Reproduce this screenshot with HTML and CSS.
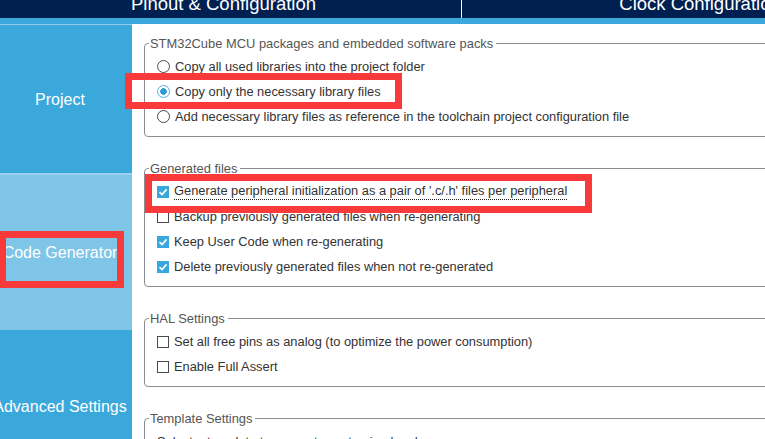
FILE: index.html
```html
<!DOCTYPE html>
<html>
<head>
<meta charset="utf-8">
<link rel="stylesheet" href="styles.css">
</head>
<body>
<header class="topbar">
  <div class="tabs">
    <div class="tab">Pinout &amp; Configuration</div>
    <div class="tab tab-second">Clock Configuration</div>
  </div>
  <div class="band"></div>
</header>
<div class="main">
  <nav class="sidebar">
    <div class="nav-item nav-project"><span>Project</span></div>
    <div class="nav-item nav-code"><span>Code Generator</span></div>
    <div class="nav-item nav-advanced"><span>Advanced Settings</span></div>
  </nav>
  <section class="content">
    <fieldset class="group">
      <legend>STM32Cube MCU packages and embedded software packs</legend>
      <div class="row"><span class="radio"></span><span>Copy all used libraries into the project folder</span></div>
      <div class="row"><span class="radio on"></span><span>Copy only the necessary library files</span></div>
      <div class="row"><span class="radio"></span><span>Add necessary library files as reference in the toolchain project configuration file</span></div>
    </fieldset>
    <fieldset class="group">
      <legend>Generated files</legend>
      <div class="row"><span class="check on"><svg viewBox="0 0 12 12" width="12" height="12"><polyline points="2.5,6.2 5,8.6 9.6,3.4" fill="none" stroke="#fff" stroke-width="1.6"/></svg></span><span class="tip">Generate peripheral initialization as a pair of '.c/.h' files per peripheral</span></div>
      <div class="row"><span class="check"></span><span>Backup previously generated files when re-generating</span></div>
      <div class="row"><span class="check on"><svg viewBox="0 0 12 12" width="12" height="12"><polyline points="2.5,6.2 5,8.6 9.6,3.4" fill="none" stroke="#fff" stroke-width="1.6"/></svg></span><span>Keep User Code when re-generating</span></div>
      <div class="row"><span class="check on"><svg viewBox="0 0 12 12" width="12" height="12"><polyline points="2.5,6.2 5,8.6 9.6,3.4" fill="none" stroke="#fff" stroke-width="1.6"/></svg></span><span>Delete previously generated files when not re-generated</span></div>
    </fieldset>
    <fieldset class="group">
      <legend>HAL Settings</legend>
      <div class="row"><span class="check"></span><span>Set all free pins as analog (to optimize the power consumption)</span></div>
      <div class="row"><span class="check"></span><span>Enable Full Assert</span></div>
    </fieldset>
    <fieldset class="group">
      <legend>Template Settings</legend>
      <div class="row"><span>Select a template to generate customized code</span></div>
    </fieldset>
  </section>
</div>
<div class="mark mark-copy"></div>
<div class="mark mark-generate"></div>
<div class="mark mark-codegen"></div>
</body>
</html>
```
FILE: styles.css
```css
html, body {
  margin: 0;
  padding: 0;
  width: 765px;
  height: 439px;
  overflow: hidden;
  background: #ffffff;
  font-family: "Liberation Sans", Arial, sans-serif;
}
body {
  position: relative;
}
.topbar {
  display: flex;
  flex-direction: column;
}
.tabs {
  display: flex;
  height: 18px;
  background: #002052;
  overflow: hidden;
  margin-left: -14px;
}
.tab {
  flex: 0 0 475px;
  height: 18px;
  line-height: 8px;
  color: #ffffff;
  font-size: 18.5px;
  text-align: center;
  white-space: nowrap;
}
.tab-second {
  flex: 0 0 476px;
  border-left: 1px solid #ffffff;
}
.band {
  height: 6px;
  background: #3aa8db;
}
.main {
  display: flex;
  height: 415px;
}
.sidebar {
  flex: 0 0 132px;
  display: flex;
  flex-direction: column;
  background: #3aa8db;
  border-top: 1px solid #8ecbea;
  box-sizing: border-box;
  overflow: hidden;
}
.nav-item {
  display: flex;
  align-items: center;
  justify-content: center;
  padding-right: 12px;
  color: #ffffff;
  font-size: 16px;
  white-space: nowrap;
  flex: none;
}
.nav-project {
  height: 146px;
  padding-top: 2px;
}
.nav-code {
  height: 155px;
  background: #7ec5e8;
  border-top: 2px solid #9ad2ee;
}
.nav-advanced {
  height: 153px;
}
.content {
  flex: 1;
  padding: 12px 0 0 12px;
  overflow: hidden;
}
.group {
  margin: 0 -40px 24px 0;
  padding: 3px 0 7px 0;
  border: 1px solid #898e95;
  border-radius: 4px;
  min-width: 0;
}
.group legend {
  margin-left: 4px;
  padding: 0 3px 0 1px;
  font-size: 12.9px;
  line-height: 15px;
  color: #555555;
}
.row {
  display: flex;
  align-items: center;
  height: 25px;
  padding-left: 12px;
  font-size: 12.85px;
  color: #333333;
  white-space: nowrap;
}
.radio {
  flex: none;
  width: 13px;
  height: 13px;
  margin-right: 5px;
  box-sizing: border-box;
  border: 1px solid #4a4a4a;
  border-radius: 50%;
  background: #ffffff;
}
.radio.on {
  border-color: #58aee0;
  background: radial-gradient(circle, #2f9ad8 0 3px, #ffffff 3.6px);
}
.check {
  flex: none;
  width: 12px;
  height: 12px;
  margin-right: 5px;
  box-sizing: border-box;
  border: 1px solid #4a4a4a;
  background: #ffffff;
  display: flex;
}
.check.on {
  border: none;
  background: #3aa6de;
}
.tip {
  border-bottom: 1px dotted #222222;
  padding-bottom: 1px;
}
.mark {
  position: absolute;
  box-sizing: border-box;
  border: 7px solid #f93a3a;
}
.mark-copy {
  left: 125px;
  top: 73px;
  width: 277px;
  height: 36px;
}
.mark-generate {
  left: 145px;
  top: 174px;
  width: 447px;
  height: 39px;
}
.mark-codegen {
  left: -1px;
  top: 231px;
  width: 125px;
  height: 57px;
}
```
